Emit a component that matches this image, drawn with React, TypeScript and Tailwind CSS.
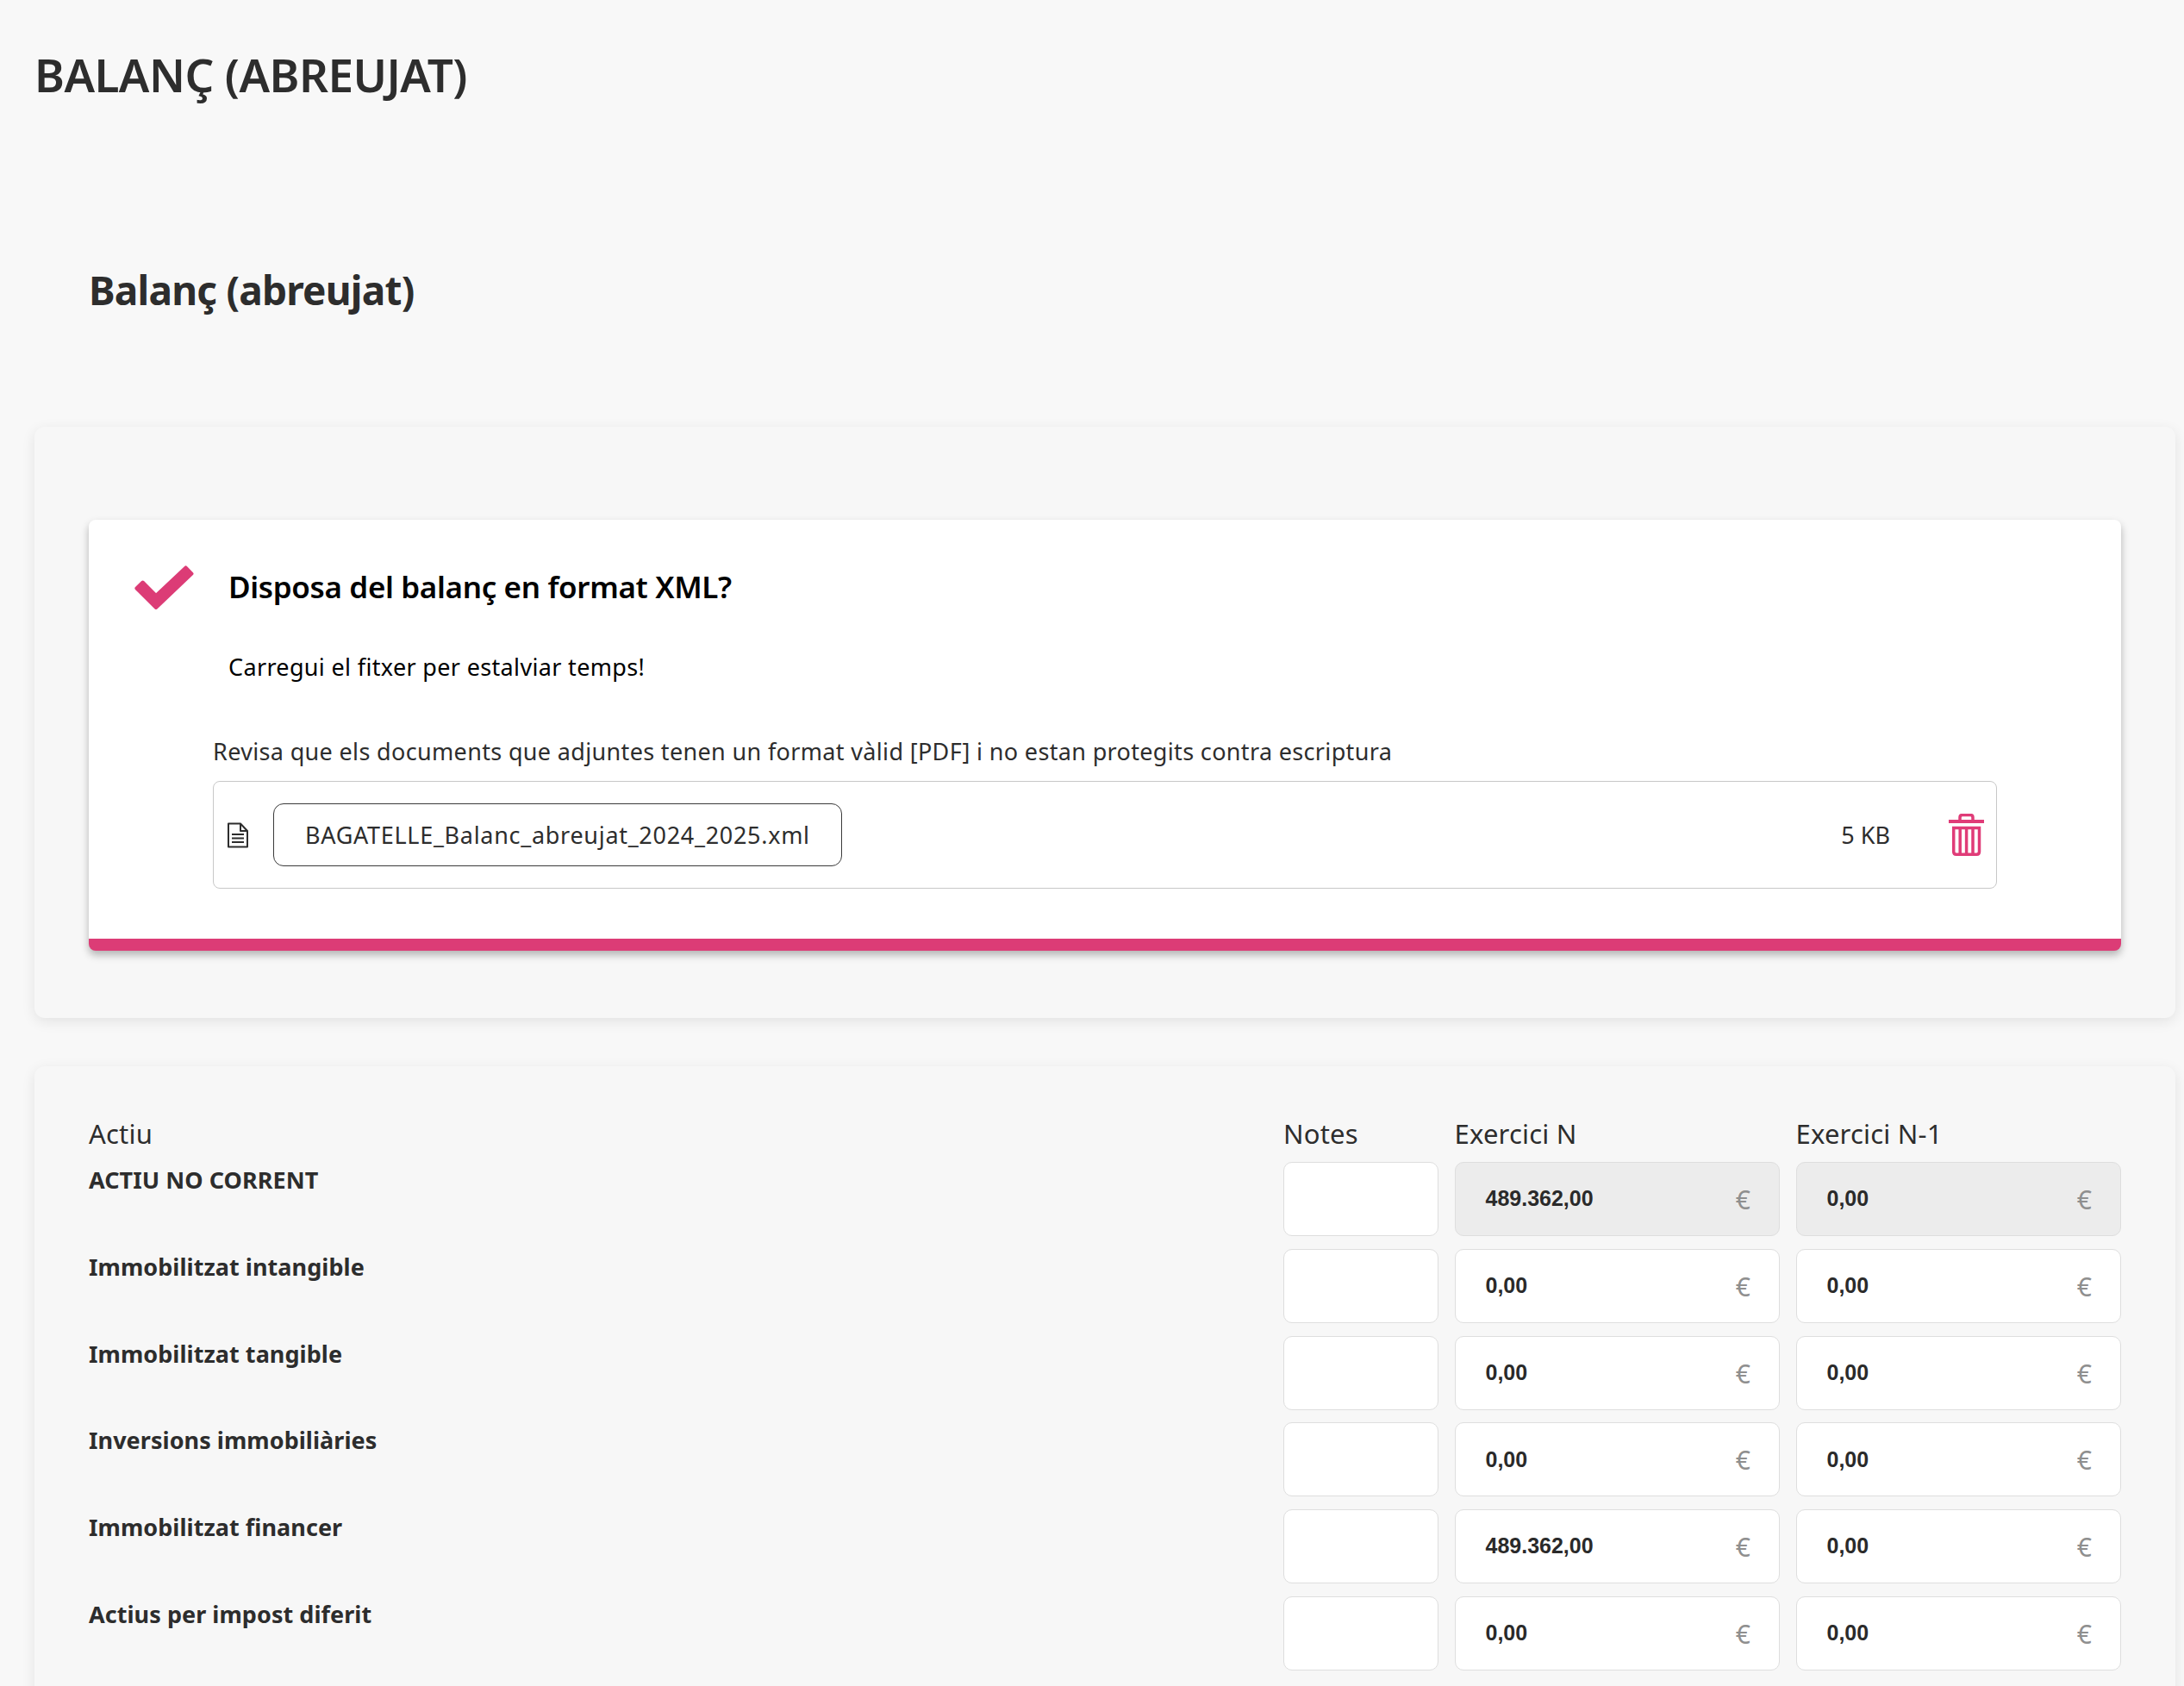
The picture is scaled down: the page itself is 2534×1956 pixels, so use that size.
const rows = [
  { label: "ACTIU NO CORRENT", n: "489.362,00", n1: "0,00", locked: true },
  { label: "Immobilitzat intangible", n: "0,00", n1: "0,00" },
  { label: "Immobilitzat tangible", n: "0,00", n1: "0,00" },
  { label: "Inversions immobiliàries", n: "0,00", n1: "0,00" },
  { label: "Immobilitzat financer", n: "489.362,00", n1: "0,00" },
  { label: "Actius per impost diferit", n: "0,00", n1: "0,00" },
];

function CheckMark() {
  return (
    <svg viewBox="0 0 71 52" className="w-[71px] h-[52px] shrink-0">
      <polygon
        points="10.6,20.5 26,36 60.5,3.4 67.5,10.6 26,50 3.4,27.5"
        fill="#dc3c76"
        stroke="#dc3c76"
        strokeWidth="4"
        strokeLinejoin="round"
      />
    </svg>
  );
}

function FileIcon() {
  return (
    <svg viewBox="0 0 26 30" fill="none" stroke="#2d2d2d" strokeWidth="2" className="w-[26px] h-[30px] shrink-0">
      <path d="M2 1.5h14l8 8.5v18.500H2z" strokeLinejoin="round" />
      <path d="M16 1.5V10h8" strokeLinejoin="round" />
      <path d="M6 14h14M6 18.500h14M6 23h14" />
    </svg>
  );
}

function TrashIcon() {
  return (
    <svg viewBox="0 0 41 49" fill="none" stroke="#e03c78" className="w-[41px] h-[49px] shrink-0">
      <path d="M13 9V4.500Q13 1.500 16 1.500H25Q28 1.500 28 4.500V9" strokeWidth="3.500" />
      <path d="M0 9h41" strokeWidth="4" />
      <path d="M5.700 16.500H35.500V44Q35.500 47.200 32.500 47.200H8.700Q5.700 47.200 5.700 44Z" strokeWidth="3.500" />
      <path d="M13.200 16.500V47M20.600 16.500V47M28 16.500V47" strokeWidth="3.500" />
    </svg>
  );
}

function AmountField({ value, locked }: { value: string; locked?: boolean }) {
  return (
    <div
      className={`h-[86px] rounded-[10px] border border-[#dedede] flex items-center justify-between pl-[35px] pr-[33px] ${
        locked ? "bg-[#ececec]" : "bg-white"
      }`}
    >
      <span className="font-['Liberation_Sans',sans-serif] font-bold text-[25px] text-[#2a2a2a]">{value}</span>
      <span className="text-[30px] leading-[36px] text-[#8f8f8f] mt-[2px]">€</span>
    </div>
  );
}

export default function App() {
  return (
    <main className="h-[1956px] overflow-hidden bg-[#f8f8f8] pl-[40px] pr-[10px] font-['Noto_Sans',sans-serif] text-[#2d2d2d]">
      <h1 className="pt-[57px] text-[53px] leading-[60px] font-semibold tracking-[-0.55px]">BALANÇ (ABREUJAT)</h1>
      <h2 className="pl-[63px] pt-[191px] pb-[131px] text-[46px] leading-[56px] font-bold tracking-[-0.8px]">Balanç (abreujat)</h2>

      <section className="h-[686px] rounded-[12px] bg-[#f7f7f7] shadow-[0_4px_16px_rgba(0,0,0,0.09)] px-[63px] pt-[108px]">
        <div className="h-[500px] rounded-[8px] bg-white border-b-[14px] border-[#dc3c76] shadow-[0_5px_10px_rgba(0,0,0,0.28)]">
          <div className="flex items-center pl-[52px] pt-[52px] gap-[39px]">
            <CheckMark />
            <h3 className="text-[35px] leading-[52px] font-semibold tracking-[-0.35px] text-black">Disposa del balanç en format XML?</h3>
          </div>
          <p className="pl-[162px] pt-[47px] text-[27px] leading-[40px] text-black tracking-[0.34px]">Carregui el fitxer per estalviar temps!</p>
          <p className="pl-[144px] pt-[58px] text-[27px] leading-[40px] tracking-[0.34px]">
            Revisa que els documents que adjuntes tenen un format vàlid [PDF] i no estan protegits contra escriptura
          </p>
          <div className="ml-[144px] mt-[14px] w-[2070px] h-[125px] rounded-[8px] border border-[#c8c8c8] flex items-center pl-[15px] pr-[14px]">
            <FileIcon />
            <div className="ml-[28px] w-[660px] h-[73px] rounded-[12px] border-[1.5px] border-[#3a3a3a] flex items-center pl-[36px] pt-[2px] text-[27px] tracking-[0.7px]">
              BAGATELLE_Balanc_abreujat_2024_2025.xml
            </div>
            <span className="ml-auto pt-[2px] text-[27px]">5 KB</span>
            <span className="ml-[68px]"><TrashIcon /></span>
          </div>
        </div>
      </section>

      <section className="mt-[56px] rounded-[12px] bg-[#f7f7f7] shadow-[0_4px_16px_rgba(0,0,0,0.09)] px-[63px] pt-[56px] pb-[60px]">
        <div className="grid grid-cols-[1367.5px_180px_377.5px_377.5px] gap-x-[18.5px] text-[31px] leading-[44px] tracking-[0.2px]">
          <span>Actiu</span>
          <span>Notes</span>
          <span>Exercici N</span>
          <span>Exercici N-1</span>
        </div>
        <div className="mt-[11px] flex flex-col gap-y-[14.8px]">
          {rows.map((row) => (
            <div key={row.label} className="grid grid-cols-[1367.5px_180px_377.5px_377.5px] gap-x-[18.5px]">
              <span className="mt-[1px] text-[27px] leading-[40px] font-bold tracking-[0.05px]">{row.label}</span>
              <div className="h-[86px] rounded-[10px] border border-[#dedede] bg-white" />
              <AmountField value={row.n} locked={row.locked} />
              <AmountField value={row.n1} locked={row.locked} />
            </div>
          ))}
        </div>
      </section>
    </main>
  );
}
